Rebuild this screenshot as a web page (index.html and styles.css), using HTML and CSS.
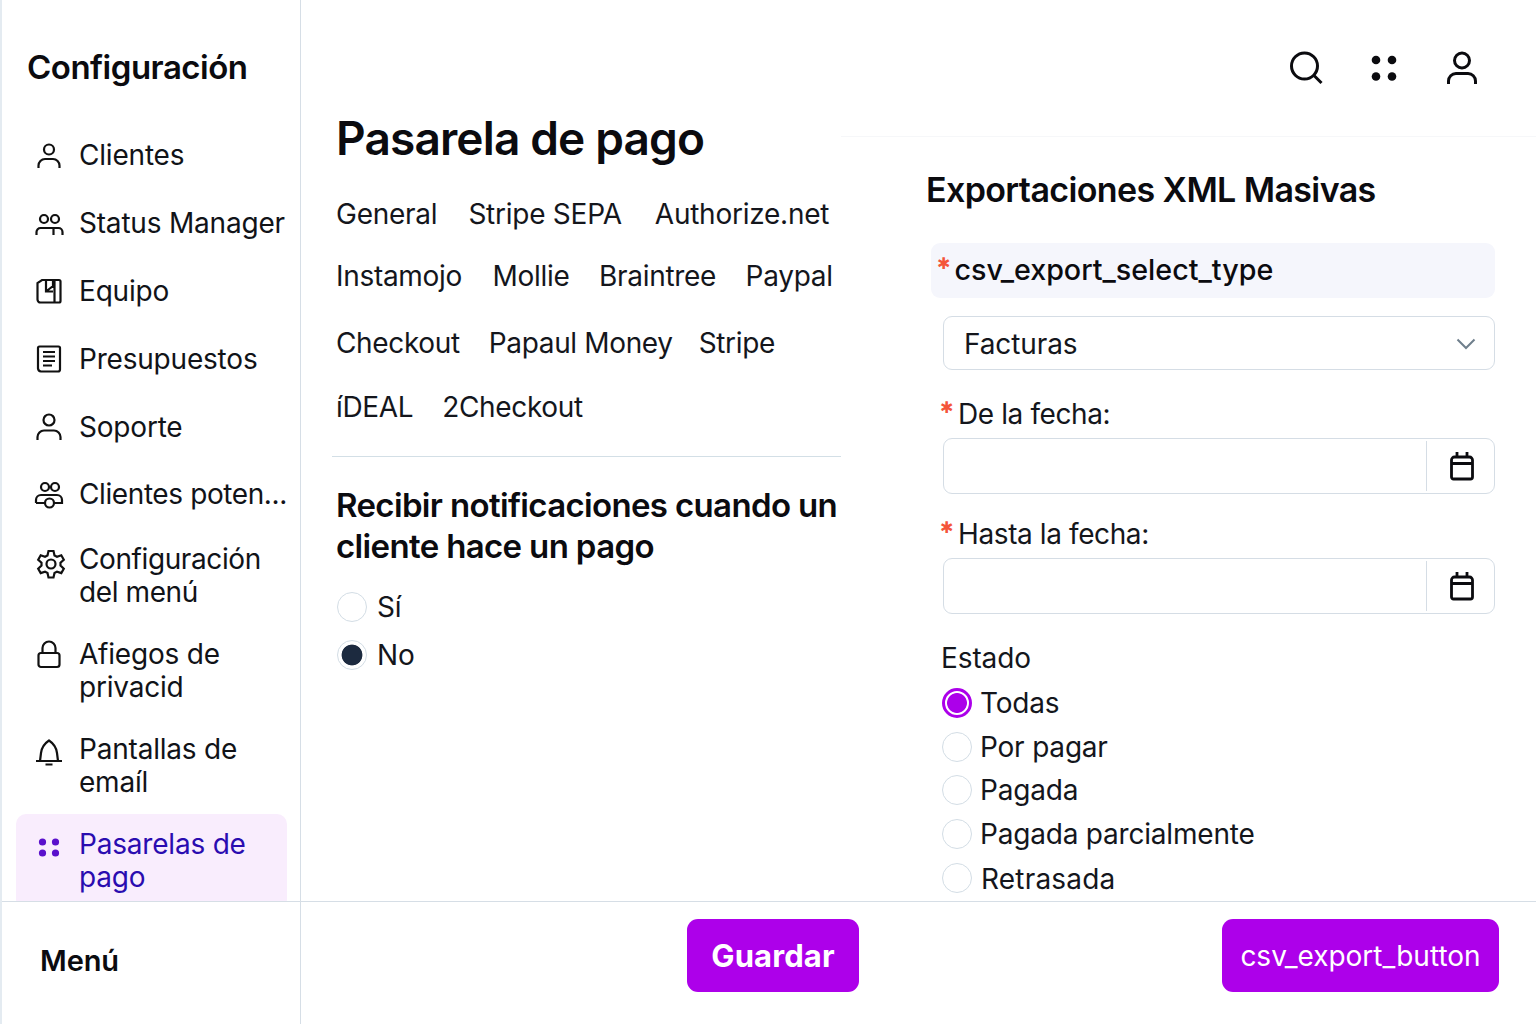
FILE: index.html
```html
<!DOCTYPE html>
<html lang="es">
<head>
<meta charset="utf-8">
<title>Pasarela de pago</title>
<link rel="stylesheet" href="styles.css">
</head>
<body>
<div class="app">
  <div class="top">
    <aside class="sidebar">
      <h2 class="side-title">Configuración</h2>
      <nav class="nav">
        <a class="nav-item"><svg class="nav-icon" viewBox="0 0 32 32"><circle cx="16" cy="9.500" r="5"/><path d="M5.500 28v-2.500a6.500 6.500 0 0 1 6.500-6.500h8a6.500 6.500 0 0 1 6.500 6.500V28"/></svg><span>Clientes</span></a>
        <a class="nav-item"><svg class="nav-icon" viewBox="0 0 32 32"><circle cx="11" cy="11" r="4"/><circle cx="22" cy="11" r="4"/><path d="M3.500 27v-3a4 4 0 0 1 4-4h18a4 4 0 0 1 4 4v3M20.500 20.500V27"/></svg><span>Status Manager</span></a>
        <a class="nav-item"><svg class="nav-icon" viewBox="0 0 32 32"><path d="M9 5h17a1.500 1.500 0 0 1 1.500 1.500V26a1.500 1.500 0 0 1-1.500 1.500H7.500A3 3 0 0 1 4.500 24.500V8L9 5zM13 5v11.500h7M20 5v6l-7 5.500M21.500 5v22"/></svg><span>Equipo</span></a>
        <a class="nav-item"><svg class="nav-icon" viewBox="0 0 32 32"><path d="M6.500 3.500h19A1.500 1.500 0 0 1 27 5v21.500a2 2 0 0 1-2 2H8a3.500 3.500 0 0 1-3-3V5A1.500 1.500 0 0 1 6.500 3.500zM10 9h12M10 13.500h12M10 18h12M10 22.500h9"/></svg><span>Presupuestos</span></a>
        <a class="nav-item"><svg class="nav-icon" viewBox="0 0 32 32"><circle cx="16" cy="9" r="5.500"/><path d="M4.500 29v-3a6.500 6.500 0 0 1 6.500-6.500h10a6.500 6.500 0 0 1 6.500 6.500v3"/></svg><span>Soporte</span></a>
        <a class="nav-item"><svg class="nav-icon" viewBox="0 0 32 32"><circle cx="12" cy="8" r="4"/><circle cx="22" cy="8" r="4"/><circle cx="16.500" cy="24" r="4.500"/><path d="M3 24v-3a5 5 0 0 1 5-5h16a5 5 0 0 1 5 5v3h-8M3 24h9"/></svg><span>Clientes poten...</span></a>
        <a class="nav-item"><svg class="nav-icon gear" viewBox="0 0 32 32"><circle cx="16" cy="15" r="4.500"/><path d="M13.500 2h5l1 4.500 2.500 1.300 4.300-1.500 2.500 4.400-3.300 3.100v2.800l3.300 3.100-2.500 4.400-4.300-1.500-2.500 1.400-1 4.500h-5l-1-4.500-2.500-1.400-4.300 1.500-2.500-4.400 3.300-3.100v-2.800L3.200 10.700l2.500-4.400L10 7.800l2.500-1.300z"/></svg><span>Configuración del menú</span></a>
        <a class="nav-item"><svg class="nav-icon" viewBox="0 0 32 32"><path d="M9.500 15V10a6.500 6.500 0 0 1 13 0v5"/><rect x="5.500" y="15" width="21" height="14" rx="2.500"/></svg><span>Afiegos de privacid</span></a>
        <a class="nav-item"><svg class="nav-icon bell" viewBox="0 0 32 32"><path d="M3 25h26M7 25l1-8c.6-5 3.500-9.500 8-12.500 4.500 3 7.400 7.500 8 12.500l1 8M12.500 28.500h7"/></svg><span>Pantallas de emaíl</span></a>
        <a class="nav-item active"><svg class="nav-icon dots" viewBox="0 0 32 32"><circle cx="9.500" cy="7" r="3.600"/><circle cx="22.500" cy="7" r="3.600"/><circle cx="9.500" cy="18" r="3.600"/><circle cx="22.500" cy="18" r="3.600"/></svg><span>Pasarelas de pago</span></a>
      </nav>
    </aside>
    <main class="col-left">
      <h1 class="page-title">Pasarela de pago</h1>
      <div class="tabs tabs-a"><span>General</span><span>Stripe SEPA</span><span>Authorize.net</span></div>
      <div class="tabs tabs-b"><span>Instamojo</span><span>Mollie</span><span>Braintree</span><span>Paypal</span></div>
      <div class="tabs tabs-c"><span>Checkout</span><span>Papaul Money</span><span>Stripe</span></div>
      <div class="tabs tabs-d"><span>íDEAL</span><span>2Checkout</span></div>
      <hr class="divider">
      <h3 class="notify-title">Recibir notificaciones cuando un cliente hace un pago</h3>
      <label class="radio notify"><input type="radio" name="notify"><span>Sí</span></label>
      <label class="radio notify"><input type="radio" name="notify" class="dark" checked><span>No</span></label>
    </main>
    <section class="col-right">
      <header class="topbar">
        <svg class="top-icon" viewBox="0 0 34 34"><circle cx="15.500" cy="15" r="13"/><path d="M25 24.500l7.500 7.500"/></svg>
        <svg class="top-icon solid" viewBox="0 0 34 34"><circle cx="9" cy="9" r="4.300"/><circle cx="25" cy="9" r="4.300"/><circle cx="9" cy="25.500" r="4.300"/><circle cx="25" cy="25.500" r="4.300"/></svg>
        <svg class="top-icon" viewBox="0 0 34 34"><circle cx="17" cy="9.500" r="7.500"/><path d="M3.500 33v-3a7.500 7.500 0 0 1 7.500-7.500h12a7.500 7.500 0 0 1 7.500 7.500v3"/></svg>
      </header>
      <div class="export">
        <h2 class="export-title">Exportaciones XML Masivas</h2>
        <div class="type-bar"><i class="req">✱</i>csv_export_select_type</div>
        <div class="field select"><span>Facturas</span><svg class="chev" viewBox="0 0 20 12"><path d="M1.500 1.500L10 10l8.500-8.500"/></svg></div>
        <div class="label label-a"><i class="req">✱</i>De la fecha:</div>
        <div class="field date"><div class="cal"><svg viewBox="0 0 26 30"><path d="M8 1v6M18 1v6M2.500 9a3 3 0 0 1 3-3h15a3 3 0 0 1 3 3V26a2 2 0 0 1-2 2h-17a2 2 0 0 1-2-2zM2.500 12.500h21"/></svg></div></div>
        <div class="label label-b"><i class="req">✱</i>Hasta la fecha:</div>
        <div class="field date"><div class="cal"><svg viewBox="0 0 26 30"><path d="M8 1v6M18 1v6M2.500 9a3 3 0 0 1 3-3h15a3 3 0 0 1 3 3V26a2 2 0 0 1-2 2h-17a2 2 0 0 1-2-2zM2.500 12.500h21"/></svg></div></div>
        <div class="state-title">Estado</div>
        <label class="radio state"><input type="radio" name="state" class="purple" checked><span>Todas</span></label>
        <label class="radio state"><input type="radio" name="state"><span>Por pagar</span></label>
        <label class="radio state"><input type="radio" name="state"><span>Pagada</span></label>
        <label class="radio state"><input type="radio" name="state"><span>Pagada parcialmente</span></label>
        <label class="radio state"><input type="radio" name="state"><span>Retrasada</span></label>
      </div>
    </section>
  </div>
  <footer class="bottom">
    <div class="side-foot">Menú</div>
    <div class="actions">
      <button class="btn btn-save">Guardar</button>
      <button class="btn btn-export">csv_export_button</button>
    </div>
  </footer>
</div>
</body>
</html>
```
FILE: styles.css
```css
* { box-sizing: border-box; }
html, body { margin: 0; height: 100%; }
body { font-family: Inter, "Liberation Sans", sans-serif; color: #0b0b0f; background: #fff; overflow: hidden; }
.app { width: 1536px; height: 1024px; display: flex; flex-direction: column; border-left: 2px solid #e4ebf1; }
.top { display: flex; height: 902px; border-bottom: 1px solid #d6dee6; overflow: hidden; flex: none; }
.sidebar { width: 299px; flex: none; border-right: 1px solid #d6dee6; padding: 0 13px 0 14px; height: 901px; overflow: hidden; }
.side-title { margin: 0; padding: 46px 0 0 11px; font-size: 33px; line-height: 42px; font-weight: 600; letter-spacing: -.5px; height: 122px; }
.nav { display: flex; flex-direction: column; }
.nav-item { display: flex; align-items: center; gap: 14px; min-height: 67.8px; padding: 14.5px 0 14.5px 18px; font-size: 28px; line-height: 33px; letter-spacing: -.2px; color: #111318; border-radius: 10px; }
.nav-item span { flex: 1; }
.nav-item:nth-child(-n+6) span { white-space: nowrap; }
.nav-item:nth-child(6), .nav-item:nth-child(7) { letter-spacing: -.4px; }
.nav-icon { width: 32px; height: 32px; flex: none; fill: none; stroke: #111; stroke-width: 2.2; margin-left: -1px; }
.nav-item:nth-child(n+7) { align-items: flex-start; }
.gear { margin: 6px -2px 0 1px; }
.bell { margin-top: 3px; }
.active { background: #f9edfd; color: #2a0cb0; }
.dots { fill: #5a10cc; stroke: none; margin-top: 7px; }
.col-left { width: 540px; flex: none; padding: 0 0 0 35px; }
.page-title { margin: 113px 0 0; font-size: 46px; line-height: 50px; font-weight: 600; letter-spacing: -.85px; }
.tabs { display: flex; font-size: 28px; line-height: 36px; letter-spacing: -.35px; color: #14161c; white-space: nowrap; }
.tabs-a { margin-top: 33px; gap: 31px; letter-spacing: -.25px; }
.tabs-a span:nth-child(2) { margin-right: 2px; }
.tabs-b { margin-top: 26px; gap: 29.5px; letter-spacing: -.3px; }
.tabs-b span:first-child { margin-right: 1px; }
.tabs-c { margin-top: 31px; gap: 26px; }
.tabs-c span:first-child { margin-right: 3px; }
.tabs-d { margin-top: 28px; gap: 29px; }
.divider { border: 0; border-top: 1px solid #d3dfe6; margin: 31px 0 0 -4px; width: 509px; }
.notify-title { margin: 28px 0 0; font-size: 33px; line-height: 41px; font-weight: 600; width: 520px; letter-spacing: -.65px; }
.radio { display: flex; align-items: center; gap: 11px; font-size: 28px; letter-spacing: -.2px; color: #14161c; }
.radio input { appearance: none; margin: 0; width: 30px; height: 30px; border-radius: 50%; border: 1px solid #d3dde5; background: #fff; flex: none; }
.radio input.dark { background: radial-gradient(circle, #1c2a3f 0 10px, #fff 10.8px); }
.radio input.purple { border: 3px solid #ac00ea; background: radial-gradient(circle, #ac00ea 0 9.500px, #fff 10.300px); }
.notify { height: 48px; margin-left: 1px; gap: 10px; }
.notify-title + .notify { margin-top: 15.500px; }
.col-right { flex: 1; min-width: 0; padding: 0; }
.topbar { height: 137px; border-bottom: 1px solid #f6f7f9; display: flex; justify-content: flex-end; gap: 44px; padding: 51px 57px 0 0; }
.top-icon { width: 34px; height: 34px; fill: none; stroke: #0b0b0f; stroke-width: 3; }
.solid { fill: #0b0b0f; stroke: none; }
.export { padding-left: 85px; padding-right: 41px; }
.export-title { margin: 31px 0 0; font-size: 34px; line-height: 44px; font-weight: 600; letter-spacing: -.62px; }
.type-bar { margin: 31px 0 0 5px; height: 55px; background: #f5f6fc; border-radius: 9px; display: flex; align-items: center; padding: 0 0 2px 6px; font-size: 28.7px; font-weight: 500; }
.req { font-style: normal; font-family: "DejaVu Sans", sans-serif; color: #f4553a; font-size: 16px; align-self: flex-start; line-height: 1; margin-right: 4px; }
.type-bar .req { margin-top: 13px; }
.field { margin-left: 17px; border: 1px solid #d5dde5; border-radius: 9px; background: #fff; }
.select { margin-top: 18px; height: 54px; display: flex; align-items: center; justify-content: space-between; padding: 2px 18px 0 20px; font-size: 28px; letter-spacing: -.1px; color: #14161c; }
.chev { width: 20px; height: 12px; fill: none; stroke: #6f7f8c; stroke-width: 2; }
.label { display: flex; align-items: center; margin-left: 14px; font-size: 28px; line-height: 36px; letter-spacing: -.4px; color: #14161c; }
.label .req { margin: 4px 5px 0 0; }
.label-a { margin-top: 26px; }
.label-b { margin-top: 22px; }
.date { height: 56px; margin-top: 6px; display: flex; justify-content: flex-end; }
.cal { width: 68px; border-left: 1px solid #d5dde5; margin: 2px 0; display: flex; align-items: center; justify-content: center; padding-left: 2px; }
.cal svg { width: 26px; height: 30px; fill: none; stroke: #0b0b0f; stroke-width: 2.8; }
.state-title { margin: 26px 0 0 15px; font-size: 28px; line-height: 36px; letter-spacing: -.1px; color: #14161c; }
.state { margin-left: 16px; height: 43.8px; gap: 9px; }
.state span { margin-left: -1px; }
.state:last-child span { margin-left: 0; letter-spacing: .2px; padding-top: 2px; }
.state-title + .state { margin-top: 5px; }
.bottom { display: flex; flex: 1; }
.side-foot { width: 299px; flex: none; border-right: 1px solid #d6dee6; padding: 41px 0 0 38px; font-size: 29px; line-height: 36px; font-weight: 600; letter-spacing: -.1px; }
.actions { flex: 1; display: flex; justify-content: space-between; padding: 17px 37px 0 386px; align-items: flex-start; }
.btn { height: 73px; border: 0; border-radius: 11px; background: #ad00ea; color: #fff; font-family: inherit; }
.btn-save { width: 172px; font-size: 31px; font-weight: 700; letter-spacing: .1px; }
.btn-export { width: 277px; font-size: 28px; font-weight: 400; letter-spacing: 0; }
```
